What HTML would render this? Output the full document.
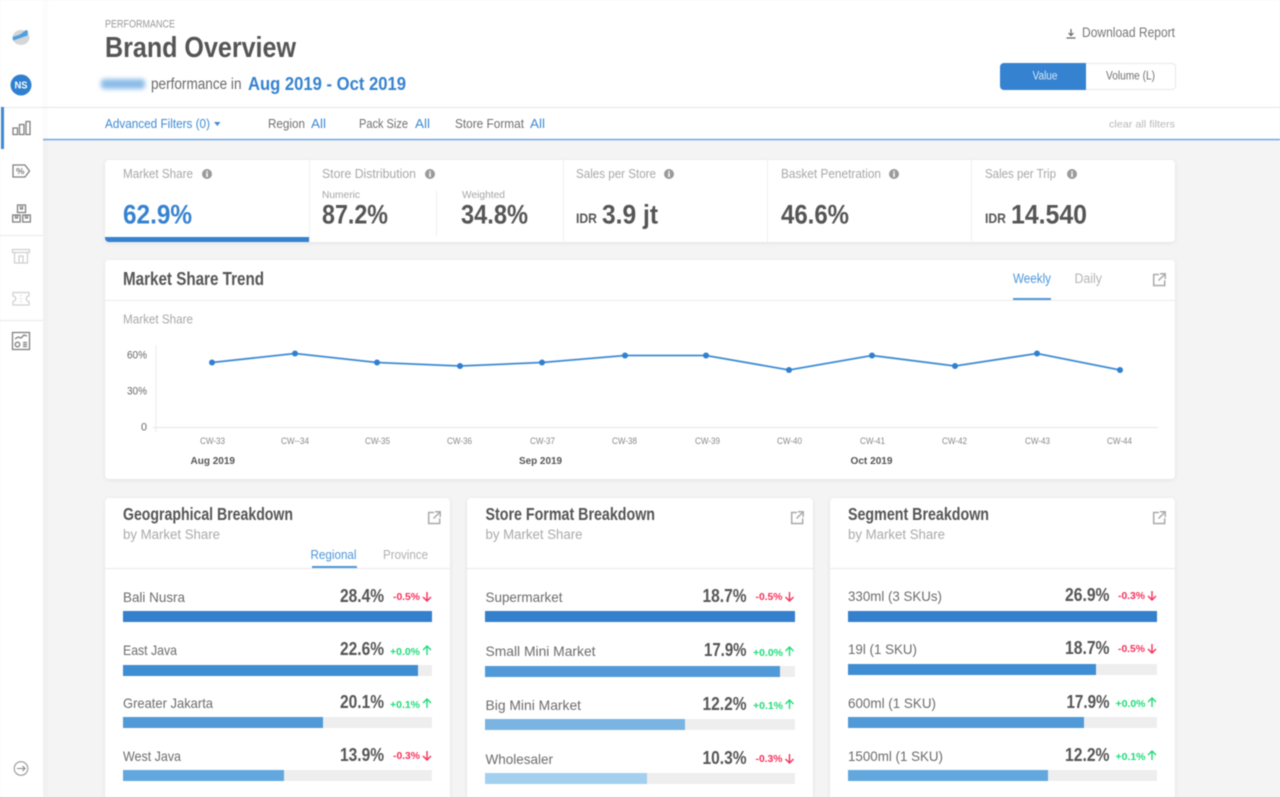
<!DOCTYPE html>
<html lang="en"><head><meta charset="utf-8"><title>Brand Overview</title>
<style>
html,body{margin:0;padding:0;width:1280px;height:797px;overflow:hidden;background:#f4f4f4}
svg{display:block;filter:blur(.5px)}
text{font-family:"Liberation Sans",Arial,sans-serif;fill:#666}
.b{font-weight:700}
.card{fill:#fff;filter:drop-shadow(0 1px 2px rgba(0,0,0,.08))}
.ic{fill:none;stroke:#808080;stroke-width:1.3}
.ic2{fill:none;stroke:#d0d0d0;stroke-width:1.3}
.ex{fill:none;stroke:#aaa;stroke-width:1.5}
.lbl{font-size:14px;fill:#6c6c6c}
.pct{font-size:18px;font-weight:700;fill:#555}
.dn{font-size:10.500px;font-weight:700;fill:#f5305a}
.up{font-size:10.500px;font-weight:700;fill:#1fdc78}
.adn{fill:none;stroke:#f5305a;stroke-width:1.400}
.aup{fill:none;stroke:#1fdc78;stroke-width:1.400}
.kl{font-size:13px;fill:#a8a8a8}
.kv{font-size:27px;font-weight:700;fill:#555}
.cw{font-size:9.500px;fill:#888}
.tr{fill:#eee}
</style></head><body>
<svg width="1280" height="797" viewBox="0 0 1280 797" xmlns="http://www.w3.org/2000/svg">
<defs><filter id="bl" x="-30%" y="-80%" width="160%" height="260%"><feGaussianBlur stdDeviation="2.4"/></filter></defs>
<rect width="1280" height="797" fill="#f4f4f4"/>
<!-- header -->
<rect x="43" y="0" width="1237" height="107" fill="#fff"/>
<rect x="43" y="107" width="1237" height="1" fill="#e6e6e6"/>
<rect x="43" y="108" width="1237" height="31" fill="#fff"/>
<rect x="43" y="138.800" width="1237" height="1.500" fill="#6ea9e2"/>
<!-- sidebar -->
<rect x="0" y="0" width="43" height="797" fill="#fff"/>
<rect x="43" y="0" width="5" height="797" fill="#000" opacity=".012"/>
<rect x="0" y="107" width="43" height="1" fill="#e8e8e8"/>
<rect x="0" y="235" width="43" height="1" fill="#e8e8e8"/>
<rect x="0" y="320" width="43" height="1" fill="#e8e8e8"/>
<rect x="1" y="107" width="3" height="42" fill="#3d8ad2"/>
<ellipse cx="21" cy="37.500" rx="8.500" ry="7.500" fill="#d4d6d8"/>
<path d="M12.500 37 L20 34.500 L26 30 L28 31 L27.500 35.500 L19 38.500 L13 40.500Z" fill="#4f9fdf"/>
<circle cx="21" cy="85" r="10.500" fill="#2f80d0"/>
<text x="14.500" y="88.500" font-size="10" class="b" style="fill:#fff" textLength="13" lengthAdjust="spacingAndGlyphs">NS</text>
<g class="ic"><rect x="13" y="128" width="4.500" height="6.500"/><rect x="19.500" y="124.500" width="4.500" height="10"/><rect x="26" y="121.500" width="4" height="13"/></g>
<path class="ic" d="M13 165h12l4.500 6-4.500 6h-12z"/>
<text x="16" y="174" font-size="8" class="b" style="fill:#777" textLength="8.500" lengthAdjust="spacingAndGlyphs">%</text>
<g class="ic"><rect x="17.500" y="205" width="8" height="7.500"/><rect x="12.700" y="215" width="7.500" height="7"/><rect x="22.800" y="215" width="7.500" height="7"/><path d="M20.500 206v3h2v-3M15.500 215v3h2v-3M25.500 215v3h2v-3"/></g>
<g class="ic2"><path d="M12.500 249.500h17v3h-17zM14.500 252.500v10.500h13v-10.500M19 263v-7h4v7"/></g>
<path class="ic2" d="M13 292.500h16v3.500a2.500 2.500 0 0 0 0 5.500v3.500h-16v-3.500a2.500 2.500 0 0 0 0-5.500zM21 295v1M21 298v1M21 301v1"/>
<g class="ic"><rect x="12.500" y="332.500" width="17" height="17"/><path d="M15 339l3-2 3 1 3-3 3 1M23 342.500h4M23 344.500h4M23 346.500h4"/><circle cx="17.500" cy="344.500" r="2.300"/></g>
<circle cx="21" cy="768.500" r="6.800" fill="none" stroke="#999" stroke-width="1.100"/>
<path d="M17 768.500h8M22.500 766l2.500 2.500-2.500 2.500" fill="none" stroke="#888" stroke-width="1.100"/>
<!-- title -->
<text x="105" y="27.500" font-size="11" style="fill:#999" textLength="70" lengthAdjust="spacingAndGlyphs">PERFORMANCE</text>
<text x="105" y="57" font-size="29" class="b" style="fill:#555" textLength="191" lengthAdjust="spacingAndGlyphs">Brand Overview</text>
<rect x="101" y="79" width="44" height="10" rx="3" fill="#8bbce8" filter="url(#bl)"/>
<text x="151" y="89" font-size="15.500" style="fill:#6a6a6a" textLength="90.500" lengthAdjust="spacingAndGlyphs">performance in</text>
<text x="248" y="90" font-size="18.500" class="b" style="fill:#3582d0" textLength="158" lengthAdjust="spacingAndGlyphs">Aug 2019 - Oct 2019</text>
<path d="M1071 29v6M1068.500 33l2.500 2.500 2.500-2.500M1066.500 38h9" fill="none" stroke="#666" stroke-width="1.200"/>
<text x="1082" y="37" font-size="13.500" style="fill:#777" textLength="93" lengthAdjust="spacingAndGlyphs">Download Report</text>
<rect x="1000.500" y="63.500" width="175" height="26" rx="3.500" fill="#fff" stroke="#e8e8e8"/>
<path d="M1004 63h82v27h-82a4 4 0 0 1-4-4v-19a4 4 0 0 1 4-4z" fill="#3582d0"/>
<text x="1032.500" y="79.500" font-size="11.500" style="fill:#d6e7f7" textLength="25" lengthAdjust="spacingAndGlyphs">Value</text>
<text x="1106" y="79.500" font-size="11.500" style="fill:#707070" textLength="49" lengthAdjust="spacingAndGlyphs">Volume (L)</text>
<!-- filters -->
<g font-size="13">
<text x="105" y="128" style="fill:#3f8bd3" textLength="105" lengthAdjust="spacingAndGlyphs">Advanced Filters (0)</text>
<path d="M214 122h6.500l-3.200 4z" fill="#3f8bd3"/>
<text x="268" y="128" style="fill:#707070" textLength="37" lengthAdjust="spacingAndGlyphs">Region</text>
<text x="311" y="128" style="fill:#3f8bd3" textLength="15" lengthAdjust="spacingAndGlyphs">All</text>
<text x="359" y="128" style="fill:#707070" textLength="49" lengthAdjust="spacingAndGlyphs">Pack Size</text>
<text x="415" y="128" style="fill:#3f8bd3" textLength="15" lengthAdjust="spacingAndGlyphs">All</text>
<text x="455" y="128" style="fill:#707070" textLength="69" lengthAdjust="spacingAndGlyphs">Store Format</text>
<text x="530" y="128" style="fill:#3f8bd3" textLength="15" lengthAdjust="spacingAndGlyphs">All</text>
</g>
<text x="1109" y="127.500" font-size="10.500" style="fill:#b8b8b8" textLength="66" lengthAdjust="spacingAndGlyphs">clear all filters</text>
<!-- KPI -->
<rect class="card" x="105" y="160" width="1070" height="82" rx="4"/>
<path d="M105 237h204v5h-200a4 4 0 0 1-4-4z" fill="#3582d0"/>
<g fill="#efefef"><rect x="309" y="160" width="1" height="82"/><rect x="563" y="160" width="1" height="82"/><rect x="767" y="160" width="1" height="82"/><rect x="971" y="160" width="1" height="82"/><rect x="436" y="191" width="1" height="45"/></g>
<text class="kl" x="123" y="178" textLength="70" lengthAdjust="spacingAndGlyphs">Market Share</text>
<text class="kl" x="322" y="178" textLength="94" lengthAdjust="spacingAndGlyphs">Store Distribution</text>
<text class="kl" x="576" y="178" textLength="80" lengthAdjust="spacingAndGlyphs">Sales per Store</text>
<text class="kl" x="781" y="178" textLength="100" lengthAdjust="spacingAndGlyphs">Basket Penetration</text>
<text class="kl" x="985" y="178" textLength="71" lengthAdjust="spacingAndGlyphs">Sales per Trip</text>
<g fill="#9a9a9a"><circle cx="207" cy="174" r="5"/><circle cx="430" cy="174" r="5"/><circle cx="669" cy="174" r="5"/><circle cx="894" cy="174" r="5"/><circle cx="1072" cy="174" r="5"/></g>
<g fill="#fff"><rect x="206.200" y="173" width="1.600" height="4"/><rect x="206.200" y="171" width="1.600" height="1.400"/><rect x="429.200" y="173" width="1.600" height="4"/><rect x="429.200" y="171" width="1.600" height="1.400"/><rect x="668.200" y="173" width="1.600" height="4"/><rect x="668.200" y="171" width="1.600" height="1.400"/><rect x="893.200" y="173" width="1.600" height="4"/><rect x="893.200" y="171" width="1.600" height="1.400"/><rect x="1071.200" y="173" width="1.600" height="4"/><rect x="1071.200" y="171" width="1.600" height="1.400"/></g>
<text class="kv" x="123" y="223.500" style="fill:#3582d0" textLength="69" lengthAdjust="spacingAndGlyphs">62.9%</text>
<text x="322" y="198" font-size="10.500" style="fill:#a5a5a5" textLength="38" lengthAdjust="spacingAndGlyphs">Numeric</text>
<text class="kv" x="322" y="223.500" textLength="66" lengthAdjust="spacingAndGlyphs">87.2%</text>
<text x="462" y="198" font-size="10.500" style="fill:#a5a5a5" textLength="43" lengthAdjust="spacingAndGlyphs">Weighted</text>
<text class="kv" x="461" y="223.500" textLength="67" lengthAdjust="spacingAndGlyphs">34.8%</text>
<text x="576" y="223" font-size="14" class="b" style="fill:#555" textLength="21" lengthAdjust="spacingAndGlyphs">IDR</text>
<text class="kv" x="602" y="223.500" textLength="56" lengthAdjust="spacingAndGlyphs">3.9 jt</text>
<text class="kv" x="781" y="223.500" textLength="68" lengthAdjust="spacingAndGlyphs">46.6%</text>
<text x="985" y="223" font-size="14" class="b" style="fill:#555" textLength="21" lengthAdjust="spacingAndGlyphs">IDR</text>
<text class="kv" x="1011" y="223.500" textLength="76" lengthAdjust="spacingAndGlyphs">14.540</text>
<!-- Trend -->
<rect class="card" x="105" y="260" width="1070" height="219" rx="4"/>
<rect x="105" y="300" width="1070" height="1" fill="#ededed"/>
<text x="123" y="285" font-size="18.500" class="b" style="fill:#555" textLength="141" lengthAdjust="spacingAndGlyphs">Market Share Trend</text>
<text x="1013" y="283" font-size="13.500" style="fill:#4d97da" textLength="38" lengthAdjust="spacingAndGlyphs">Weekly</text>
<rect x="1013" y="298" width="38" height="2" fill="#4d97da"/>
<text x="1074.500" y="283" font-size="13.500" style="fill:#b4b4b4" textLength="27.500" lengthAdjust="spacingAndGlyphs">Daily</text>
<path class="ex" d="M1159 274.500h-5.300v11h11v-5.300M1158.500 280.500l6.500-6.500M1160 273.800h5.200v5.200"/>
<text class="kl" x="123" y="323.500" textLength="70" lengthAdjust="spacingAndGlyphs">Market Share</text>
<g font-size="11" style="fill:#888">
<text x="127" y="358.500" textLength="20" lengthAdjust="spacingAndGlyphs">60%</text>
<text x="127" y="394.500" textLength="20" lengthAdjust="spacingAndGlyphs">30%</text>
<text x="141" y="430.500" textLength="6" lengthAdjust="spacingAndGlyphs">0</text>
</g>
<rect x="155.500" y="345" width="1" height="87" fill="#ececec"/>
<rect x="153" y="427" width="1005" height="1" fill="#e6e6e6"/>
<polyline points="212,362.500 295,353.500 377,362.500 460,366 542,362.500 625,355.500 706,355.500 789,370 872,355.500 955,366 1037,353.500 1120,370" fill="none" stroke="#3d8bd4" stroke-width="1.800"/>
<g fill="#2f80d0"><circle cx="212" cy="362.500" r="3"/><circle cx="295" cy="353.500" r="3"/><circle cx="377" cy="362.500" r="3"/><circle cx="460" cy="366" r="3"/><circle cx="542" cy="362.500" r="3"/><circle cx="625" cy="355.500" r="3"/><circle cx="706" cy="355.500" r="3"/><circle cx="789" cy="370" r="3"/><circle cx="872" cy="355.500" r="3"/><circle cx="955" cy="366" r="3"/><circle cx="1037" cy="353.500" r="3"/><circle cx="1120" cy="370" r="3"/></g>
<g>
<text class="cw" x="200" y="444" textLength="25" lengthAdjust="spacingAndGlyphs">CW-33</text>
<text class="cw" x="281" y="444" textLength="28" lengthAdjust="spacingAndGlyphs">CW--34</text>
<text class="cw" x="365" y="444" textLength="25" lengthAdjust="spacingAndGlyphs">CW-35</text>
<text class="cw" x="447" y="444" textLength="25" lengthAdjust="spacingAndGlyphs">CW-36</text>
<text class="cw" x="530" y="444" textLength="25" lengthAdjust="spacingAndGlyphs">CW-37</text>
<text class="cw" x="612" y="444" textLength="25" lengthAdjust="spacingAndGlyphs">CW-38</text>
<text class="cw" x="695" y="444" textLength="25" lengthAdjust="spacingAndGlyphs">CW-39</text>
<text class="cw" x="777" y="444" textLength="25" lengthAdjust="spacingAndGlyphs">CW-40</text>
<text class="cw" x="860" y="444" textLength="25" lengthAdjust="spacingAndGlyphs">CW-41</text>
<text class="cw" x="942" y="444" textLength="25" lengthAdjust="spacingAndGlyphs">CW-42</text>
<text class="cw" x="1025" y="444" textLength="25" lengthAdjust="spacingAndGlyphs">CW-43</text>
<text class="cw" x="1107" y="444" textLength="25" lengthAdjust="spacingAndGlyphs">CW-44</text>
</g>
<g font-size="10.500" class="b">
<text x="190.500" y="464" style="fill:#555" textLength="44.500" lengthAdjust="spacingAndGlyphs">Aug 2019</text>
<text x="519" y="464" style="fill:#555" textLength="43" lengthAdjust="spacingAndGlyphs">Sep 2019</text>
<text x="850.500" y="464" style="fill:#555" textLength="42" lengthAdjust="spacingAndGlyphs">Oct 2019</text>
</g>
<!-- Breakdown cards -->
<rect class="card" x="105" y="498" width="345" height="320" rx="4"/>
<rect class="card" x="467" y="498" width="346" height="320" rx="4"/>
<rect class="card" x="830" y="498" width="345" height="320" rx="4"/>
<g fill="#e9e9e9"><rect x="105" y="568" width="345" height="1"/><rect x="467" y="568" width="346" height="1"/><rect x="830" y="568" width="345" height="1"/></g>
<text x="123" y="520" font-size="17.500" class="b" style="fill:#555" textLength="170" lengthAdjust="spacingAndGlyphs">Geographical Breakdown</text>
<text x="485.500" y="520" font-size="17.500" class="b" style="fill:#555" textLength="169.500" lengthAdjust="spacingAndGlyphs">Store Format Breakdown</text>
<text x="848" y="520" font-size="17.500" class="b" style="fill:#555" textLength="141" lengthAdjust="spacingAndGlyphs">Segment Breakdown</text>
<g font-size="13.500">
<text x="123" y="539" style="fill:#aaa" textLength="97" lengthAdjust="spacingAndGlyphs">by Market Share</text>
<text x="485.500" y="539" style="fill:#aaa" textLength="97" lengthAdjust="spacingAndGlyphs">by Market Share</text>
<text x="848" y="539" style="fill:#aaa" textLength="97" lengthAdjust="spacingAndGlyphs">by Market Share</text>
</g>
<path class="ex" d="M434 512.500h-5.300v11h11v-5.300M433.500 518.500l6.500-6.500M435 511.800h5.200v5.200"/>
<path class="ex" d="M797 512.500h-5.300v11h11v-5.300M796.500 518.500l6.500-6.500M798 511.800h5.200v5.200"/>
<path class="ex" d="M1159 512.500h-5.300v11h11v-5.300M1158.500 518.500l6.500-6.500M1160 511.800h5.200v5.200"/>
<text x="310.500" y="559" font-size="13" style="fill:#4d97da" textLength="46" lengthAdjust="spacingAndGlyphs">Regional</text>
<rect x="312" y="566" width="45" height="2" fill="#4d97da"/>
<text x="383" y="559" font-size="13" style="fill:#b0b0b0" textLength="45" lengthAdjust="spacingAndGlyphs">Province</text>
<!-- Geo rows -->
<rect class="tr" x="123" y="611" width="309" height="11"/><rect x="123" y="611" width="309" height="11" fill="#3580cd"/>
<rect class="tr" x="123" y="665" width="309" height="11"/><rect x="123" y="665" width="295" height="11" fill="#3f8dd3"/>
<rect class="tr" x="123" y="717" width="309" height="11"/><rect x="123" y="717" width="200" height="11" fill="#509ad8"/>
<rect class="tr" x="123" y="770" width="309" height="11"/><rect x="123" y="770" width="161" height="11" fill="#62a8de"/>
<text class="lbl" x="123" y="602" textLength="62" lengthAdjust="spacingAndGlyphs">Bali Nusra</text>
<text class="lbl" x="123" y="655" textLength="54" lengthAdjust="spacingAndGlyphs">East Java</text>
<text class="lbl" x="123" y="708" textLength="90" lengthAdjust="spacingAndGlyphs">Greater Jakarta</text>
<text class="lbl" x="123" y="761" textLength="58" lengthAdjust="spacingAndGlyphs">West Java</text>
<text class="pct" x="340" y="602" textLength="44" lengthAdjust="spacingAndGlyphs">28.4%</text>
<text class="pct" x="340" y="655" textLength="44" lengthAdjust="spacingAndGlyphs">22.6%</text>
<text class="pct" x="340" y="708" textLength="44" lengthAdjust="spacingAndGlyphs">20.1%</text>
<text class="pct" x="340" y="761" textLength="44" lengthAdjust="spacingAndGlyphs">13.9%</text>
<text class="dn" x="393" y="600" textLength="27" lengthAdjust="spacingAndGlyphs">-0.5%</text><path class="adn" d="M427 592v9M423 597l4 4 4-4"/>
<text class="up" x="390" y="655" textLength="30" lengthAdjust="spacingAndGlyphs">+0.0%</text><path class="aup" d="M427 655v-9M423 650l4-4 4 4"/>
<text class="up" x="390" y="708" textLength="30" lengthAdjust="spacingAndGlyphs">+0.1%</text><path class="aup" d="M427 708v-9M423 703l4-4 4 4"/>
<text class="dn" x="393" y="759" textLength="27" lengthAdjust="spacingAndGlyphs">-0.3%</text><path class="adn" d="M427 751v9M423 756l4 4 4-4"/>
<!-- Store rows -->
<rect class="tr" x="485" y="611" width="310" height="11"/><rect x="485" y="611" width="310" height="11" fill="#3580cd"/>
<rect class="tr" x="485" y="666" width="310" height="11"/><rect x="485" y="666" width="295" height="11" fill="#509ad8"/>
<rect class="tr" x="485" y="719" width="310" height="11"/><rect x="485" y="719" width="200" height="11" fill="#7ab4e3"/>
<rect class="tr" x="485" y="773" width="310" height="11"/><rect x="485" y="773" width="162" height="11" fill="#a3d0ee"/>
<text class="lbl" x="485.500" y="602" textLength="77" lengthAdjust="spacingAndGlyphs">Supermarket</text>
<text class="lbl" x="485.500" y="656" textLength="110" lengthAdjust="spacingAndGlyphs">Small Mini Market</text>
<text class="lbl" x="485.500" y="710" textLength="95.500" lengthAdjust="spacingAndGlyphs">Big Mini Market</text>
<text class="lbl" x="485.500" y="764" textLength="67.500" lengthAdjust="spacingAndGlyphs">Wholesaler</text>
<text class="pct" x="702.500" y="602" textLength="44" lengthAdjust="spacingAndGlyphs">18.7%</text>
<text class="pct" x="704" y="656" textLength="42.500" lengthAdjust="spacingAndGlyphs">17.9%</text>
<text class="pct" x="702.500" y="710" textLength="44" lengthAdjust="spacingAndGlyphs">12.2%</text>
<text class="pct" x="702.500" y="764" textLength="44" lengthAdjust="spacingAndGlyphs">10.3%</text>
<text class="dn" x="755.500" y="600" textLength="27" lengthAdjust="spacingAndGlyphs">-0.5%</text><path class="adn" d="M789.500 592v9M785.500 597l4 4 4-4"/>
<text class="up" x="753" y="656" textLength="30" lengthAdjust="spacingAndGlyphs">+0.0%</text><path class="aup" d="M789.500 656v-9M785.500 651l4-4 4 4"/>
<text class="up" x="753" y="709" textLength="30" lengthAdjust="spacingAndGlyphs">+0.1%</text><path class="aup" d="M789.500 709v-9M785.500 704l4-4 4 4"/>
<text class="dn" x="755.500" y="762" textLength="27" lengthAdjust="spacingAndGlyphs">-0.3%</text><path class="adn" d="M789.500 754v9M785.500 759l4 4 4-4"/>
<!-- Segment rows -->
<rect class="tr" x="848" y="611" width="309" height="11"/><rect x="848" y="611" width="309" height="11" fill="#3580cd"/>
<rect class="tr" x="848" y="664" width="309" height="11"/><rect x="848" y="664" width="248" height="11" fill="#3f8dd3"/>
<rect class="tr" x="848" y="717" width="309" height="11"/><rect x="848" y="717" width="236" height="11" fill="#509ad8"/>
<rect class="tr" x="848" y="770" width="309" height="11"/><rect x="848" y="770" width="200" height="11" fill="#62a8de"/>
<text class="lbl" x="848" y="601" textLength="94" lengthAdjust="spacingAndGlyphs">330ml (3 SKUs)</text>
<text class="lbl" x="848" y="654" textLength="69" lengthAdjust="spacingAndGlyphs">19l (1 SKU)</text>
<text class="lbl" x="848" y="708" textLength="88" lengthAdjust="spacingAndGlyphs">600ml (1 SKU)</text>
<text class="lbl" x="848" y="761" textLength="95" lengthAdjust="spacingAndGlyphs">1500ml (1 SKU)</text>
<text class="pct" x="1065" y="601" textLength="44.500" lengthAdjust="spacingAndGlyphs">26.9%</text>
<text class="pct" x="1065" y="654" textLength="44.500" lengthAdjust="spacingAndGlyphs">18.7%</text>
<text class="pct" x="1066.500" y="708" textLength="43" lengthAdjust="spacingAndGlyphs">17.9%</text>
<text class="pct" x="1065" y="761" textLength="44.500" lengthAdjust="spacingAndGlyphs">12.2%</text>
<text class="dn" x="1118" y="599" textLength="27" lengthAdjust="spacingAndGlyphs">-0.3%</text><path class="adn" d="M1152 591v9M1148 596l4 4 4-4"/>
<text class="dn" x="1118" y="652" textLength="27" lengthAdjust="spacingAndGlyphs">-0.5%</text><path class="adn" d="M1152 644v9M1148 649l4 4 4-4"/>
<text class="up" x="1115.500" y="707" textLength="30" lengthAdjust="spacingAndGlyphs">+0.0%</text><path class="aup" d="M1152 707v-9M1148 702l4-4 4 4"/>
<text class="up" x="1115.500" y="760" textLength="30" lengthAdjust="spacingAndGlyphs">+0.1%</text><path class="aup" d="M1152 760v-9M1148 755l4-4 4 4"/>
</svg>
</body></html>
